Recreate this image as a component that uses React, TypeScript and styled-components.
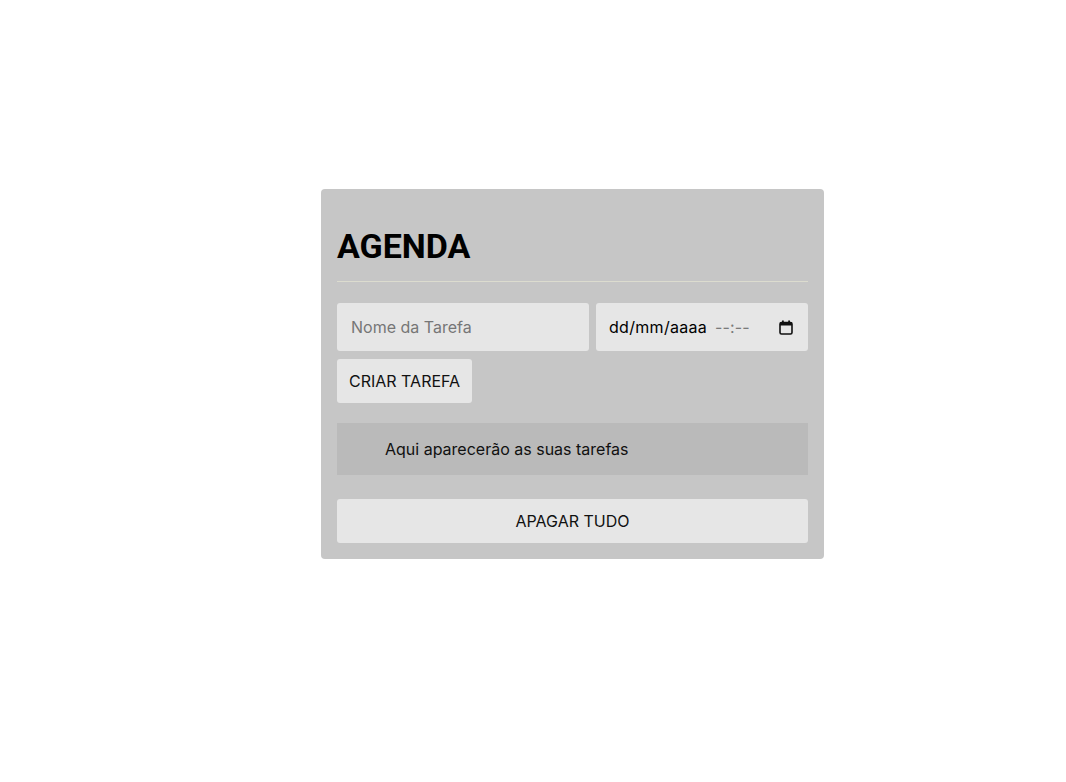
import React from "react";
import styled, { createGlobalStyle } from "styled-components";

const Global = createGlobalStyle`
  html, body { margin: 0; padding: 0; background: #ffffff; }
  body { font-family: Inter, "Noto Sans", sans-serif; }
  * { box-sizing: border-box; }
`;

const Page = styled.main`
  padding: 189px 0 0 321px;
  min-height: 782px;
`;

const Card = styled.section`
  width: 503px;
  background: #c6c6c6;
  border-radius: 4px;
  padding: 16px;
  display: flex;
  flex-direction: column;
`;

const Header = styled.header`
  padding: 23px 0 17px;
  border-bottom: 1px solid #dcdccf;
`;

const Title = styled.h1`
  margin: 0;
  font-family: Roboto, "Liberation Sans", Arial, sans-serif;
  font-weight: 700;
  font-size: 34px;
  line-height: 36px;
  color: #000;
`;

const Form = styled.form`
  margin-top: 21px;
  display: flex;
  flex-direction: column;
  align-items: flex-start;
  gap: 8px;
`;

const Row = styled.div`
  display: flex;
  gap: 7px;
  width: 100%;
`;

const TextInput = styled.input`
  width: 252px;
  height: 48px;
  border: none;
  border-radius: 3px;
  background: #e6e6e6;
  padding: 0 14px;
  font-family: Inter, sans-serif;
  font-size: 16px;
  color: #000;
  outline: none;
  &::placeholder { color: #767676; }
`;

const DateField = styled.div`
  flex: 1;
  height: 48px;
  border-radius: 3px;
  background: #e6e6e6;
  padding: 0 15px 0 13px;
  display: flex;
  align-items: center;
  font-family: Inter, sans-serif;
  font-size: 16px;
  color: #000;
`;

const DatePart = styled.span<{ $muted?: boolean }>`
  color: ${(p) => (p.$muted ? "#7a7a7a" : "#000")};
  margin-right: ${(p) => (p.$muted ? "0" : "8px")};
  letter-spacing: ${(p) => (p.$muted ? "0.1px" : "0.3px")};
`;

const CalIcon = styled.svg`
  margin-left: auto;
  width: 14px;
  height: 15px;
`;

const Button = styled.button<{ $full?: boolean }>`
  height: 44px;
  width: ${(p) => (p.$full ? "100%" : "auto")};
  padding: 0 12px;
  border: none;
  border-radius: 3px;
  background: #e6e6e6;
  font-family: Inter, sans-serif;
  font-size: 16px;
  color: #111;
  cursor: pointer;
`;

const TaskList = styled.ul`
  margin: 20px 0 0;
  padding: 0 0 0 48px;
  height: 52px;
  background: #bababa;
  list-style: none;
  display: flex;
  align-items: center;
`;

const EmptyItem = styled.li`
  font-family: Inter, sans-serif;
  font-size: 16px;
  color: #111;
`;

const Footer = styled.div`
  margin-top: 24px;
`;

export default function App() {
  return (
    <>
      <Global />
      <Page>
        <Card>
          <Header>
            <Title>AGENDA</Title>
          </Header>
          <Form onSubmit={(e) => e.preventDefault()}>
            <Row>
              <TextInput placeholder="Nome da Tarefa" />
              <DateField>
                <DatePart>dd/mm/aaaa</DatePart>
                <DatePart $muted>--:--</DatePart>
                <CalIcon viewBox="0 0 14 15" aria-hidden>
                  <rect x="1" y="2.5" width="12" height="11.5" rx="1.5" fill="none" stroke="#111" strokeWidth="1.6" />
                  <rect x="1" y="2.5" width="12" height="3" fill="#111" />
                  <rect x="3" y="0.5" width="1.8" height="3" fill="#111" />
                  <rect x="9.2" y="0.5" width="1.8" height="3" fill="#111" />
                </CalIcon>
              </DateField>
            </Row>
            <Button type="submit">CRIAR TAREFA</Button>
          </Form>
          <TaskList>
            <EmptyItem>Aqui aparecerão as suas tarefas</EmptyItem>
          </TaskList>
          <Footer>
            <Button $full type="button">APAGAR TUDO</Button>
          </Footer>
        </Card>
      </Page>
    </>
  );
}
